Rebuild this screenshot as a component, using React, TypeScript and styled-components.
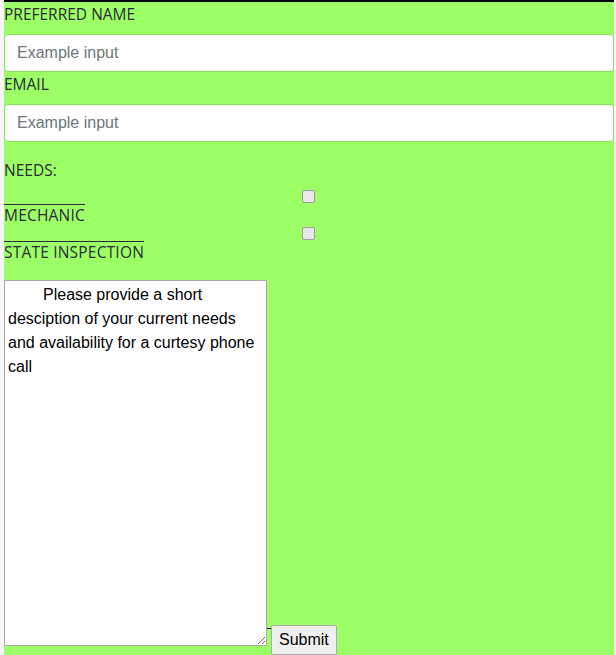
import React from "react";
import styled, { createGlobalStyle } from "styled-components";

const Global = createGlobalStyle`
  body {
    margin: 0;
    background: #f7f7f7;
    overflow: hidden;
  }
`;

const Form = styled.form`
  margin-left: 4px;
  width: 610px;
  min-height: 655px;
  background: #9cff66;
  border-top: 2px solid #000;
  font-family: "Open Sans", "Segoe UI", sans-serif;
  font-size: 15.5px;
  line-height: 20px;
  color: #2b2a38;
  box-sizing: border-box;
`;

const Label = styled.label`
  display: block;
  line-height: 20px;
  padding-top: 2px;
  margin-bottom: 10px;
`;

const Input = styled.input`
  display: block;
  width: 100%;
  height: 38px;
  box-sizing: border-box;
  padding: 6px 12px;
  border: 1px solid #86dc5c;
  border-radius: 4px;
  background: #fff;
  font-family: "Liberation Sans", Arial, sans-serif;
  font-size: 16px;
  margin: 0;

  &::placeholder {
    color: #6c757d;
  }
`;

const Heading = styled.div`
  line-height: 20px;
  margin-top: 18px;
`;

const CheckRow = styled.div<{ $top: number }>`
  display: flex;
  justify-content: center;
  margin-top: ${(p) => p.$top}px;
  height: 14px;
  padding-right: 2px;
`;

const Box = styled.input`
  appearance: none;
  width: 13px;
  height: 13px;
  margin: 0;
  box-sizing: border-box;
  background: #e8e8e8;
  border: 1px solid #9c9c9c;
  border-radius: 2px;
`;

const Option = styled.label`
  display: inline-block;
  border-top: 1px solid #2b2a38;
  line-height: 20px;
  letter-spacing: 0.2px;
`;

const Bottom = styled.div`
  display: flex;
  align-items: flex-end;
  margin-top: 18px;
`;

const Area = styled.textarea`
  width: 263px;
  height: 366px;
  box-sizing: border-box;
  border: 1px solid #a9a9a9;
  padding: 2px 3px;
  margin: 0;
  font-family: "Liberation Sans", Arial, sans-serif;
  font-size: 16px;
  line-height: 24px;
  text-indent: 35px;
  color: #000;
  resize: both;
`;

const Tick = styled.span`
  width: 4px;
  border-top: 1px solid #000;
  align-self: flex-start;
  margin-top: 348px;
`;

const Submit = styled.button`
  height: 30px;
  margin-bottom: -9px;
  padding: 1px 7px;
  background: #efefef;
  border: 1px solid #aaa;
  border-radius: 2px;
  font-family: "Liberation Sans", Arial, sans-serif;
  font-size: 16px;
  color: #000;
`;

export default function App() {
  return (
    <>
      <Global />
      <Form>
        <Label>PREFERRED NAME</Label>
        <Input placeholder="Example input" />
        <Label>EMAIL</Label>
        <Input placeholder="Example input" />
        <Heading>NEEDS:</Heading>
        <CheckRow $top={10}>
          <Box type="checkbox" />
        </CheckRow>
        <Option>MECHANIC</Option>
        <CheckRow $top={2}>
          <Box type="checkbox" />
        </CheckRow>
        <Option>STATE INSPECTION</Option>
        <Bottom>
          <Area defaultValue="Please provide a short desciption of your current needs and availability for a curtesy phone call" />
          <Tick />
          <Submit type="button">Submit</Submit>
        </Bottom>
      </Form>
    </>
  );
}
